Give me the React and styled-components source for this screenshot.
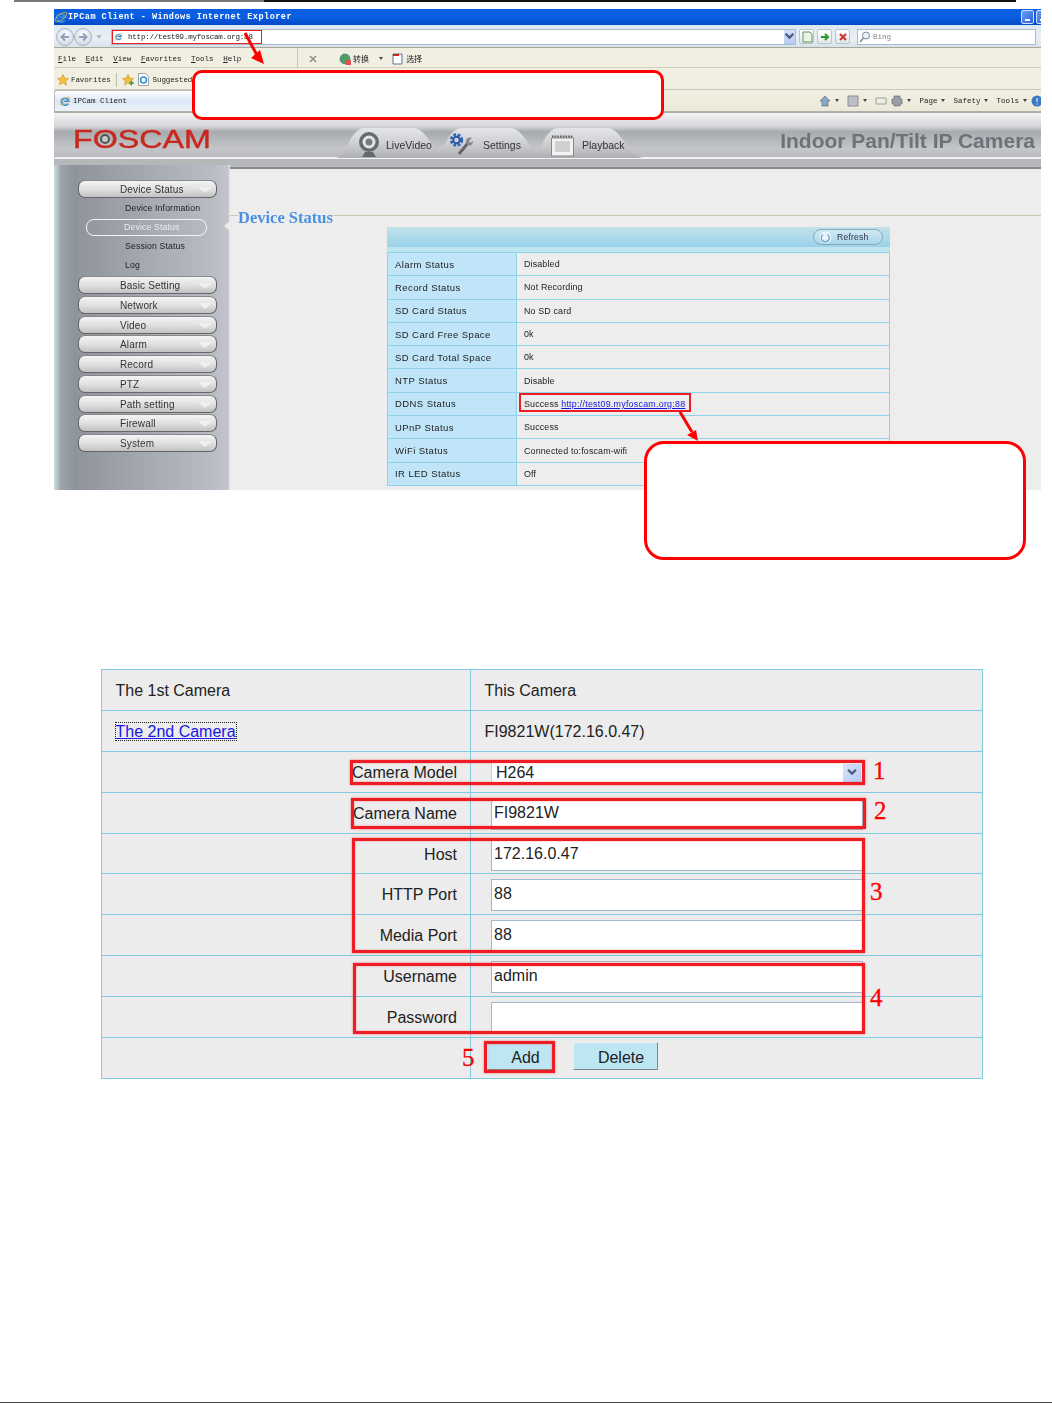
import React from "react";
import styled, { createGlobalStyle } from "styled-components";

const Global = createGlobalStyle`
  html, body { margin: 0; padding: 0; background: #fff; }
  body { font-family: "Liberation Sans", Arial, sans-serif; }
  * { box-sizing: border-box; }
`;

const Page = styled.div`
  position: relative; width: 1052px; height: 1404px; overflow: hidden;
  display: flex; flex-direction: column; background: #fff;
`;
const TopRule = styled.div`
  height: 2px; margin: 0 36px 0 14px;
  background: linear-gradient(90deg, #777 0 25%, #111 25% 100%);
`;
const FootRule = styled.div`
  height: 1px; margin-top: auto; margin-bottom: 1px; background: #444;
`;
const Figure = styled.section`
  position: relative; width: 987px; height: 481px; margin: 7px 0 0 54px;
`;
const Shot = styled.div`
  width: 987px; height: 481px; overflow: hidden; display: flex; flex-direction: column;
  filter: blur(0.3px); background: #ededed;
`;
const Chrome = styled.div`
  font-family: "Liberation Mono", monospace; font-size: 7.5px; color: #222;
`;
const TitleBar = styled.div`
  height: 16px; display: flex; align-items: center; gap: 0; padding-left: 0;
  background: linear-gradient(#0a5fe0, #0a5ee4 50%, #0349c4);
  color: #fff; font-weight: 700; font-size: 8.5px; letter-spacing: .5px;
`;
const WinButtons = styled.div`
  margin-left: auto; display: flex; gap: 2px; margin-right: -8px;
`;
const WinBtn = styled.div`
  position: relative; width: 13px; height: 14px; border: 1px solid #cfe0ff; border-radius: 2px;
  background: linear-gradient(135deg, #6b9cf0, #2a62d8);
  &::after { content: ""; position: absolute; left: 3px; bottom: 2px; width: 5px; height: 2px; background: #fff; }
`;
const AddressBar = styled.div`
  height: 23px; display: flex; align-items: center; padding: 1px 4px 0 2px;
  background: linear-gradient(#dce8f2, #eaf0f5 60%, #d8e2ea);
  border-bottom: 1px solid #a8a89a;
`;
const NavRound = styled.div`
  width: 18px; height: 18px; border-radius: 50%; border: 1px solid #aab4c0;
  background: radial-gradient(circle at 50% 35%, #fff, #c4d0e0);
  display: flex; align-items: center; justify-content: center;
`;
const NavDrop = styled.div`
  width: 0; height: 0; margin: 0 9px 0 4px;
  border: 3px solid transparent; border-top: 4px solid #b4bcc6; border-bottom: 0;
`;
const UrlField = styled.div`
  width: 685px; height: 16px; background: #fff; border: 1px solid #a8bccb;
  display: flex; align-items: center; padding-left: 2px; gap: 5px; letter-spacing: -.2px;
`;
const UrlDrop = styled.div`
  margin-left: auto; width: 11px; height: 14px; background: linear-gradient(#d4e0f8, #b8ccf0);
  display: flex; align-items: center; justify-content: center; color: #405070;
`;
const ToolSquare = styled.div`
  width: 15px; height: 15px; margin-left: 3px; border: 1px solid #b8c6cf; border-radius: 2px;
  background: linear-gradient(#fff, #dfe6ea); display: flex; align-items: center; justify-content: center;
`;
const SearchField = styled.div`
  width: 179px; height: 16px; margin-left: 7px; background: #fff; border: 1px solid #a8bccb;
  display: flex; align-items: center; gap: 2px; color: #888; padding-left: 1px;
`;
const MenuBar = styled.div`
  height: 20px; display: flex; align-items: center; gap: 9.6px; padding: 2px 0 0 4px;
  background: #f1efe2; border-bottom: 1px solid #d4d0c0;
`;
const MenuItem = styled.span`
  &::first-letter { text-decoration: underline; }
`;
const MenuDivider = styled.i`
  width: 1px; height: 20px; margin-top: -2px; background: #c8c6b8; margin-left: ${p => p.$l || 48}px;
`;
const Cjk = styled.span`
  font-family: "Noto Sans CJK SC", sans-serif; font-size: 8px; display: inline-flex; align-items: center; gap: 2px;
  margin-left: ${p => p.$l || 0}px;
`;
const FavBar = styled.div`
  height: 22px; display: flex; align-items: center; gap: 2px; padding: 2px 0 0 3px; letter-spacing: -.1px;
  background: #f1efe2; border-bottom: 1px solid #c9c7b8;
`;
const FavDivider = styled.i`
  width: 1px; height: 14px; background: #bcbaab; margin: 0 3px;
`;
const TabBar = styled.div`
  height: 23px; display: flex; align-items: flex-end;
  background: linear-gradient(#f1efe2, #ece9da);
  border-bottom: 2px solid #b0b0a8;
`;
const PageTab = styled.div`
  width: 140px; height: 21px; display: flex; align-items: center; gap: 2px; padding-left: 4px;
  border: 1px solid #b8bcc0; border-bottom: 0; border-radius: 3px 3px 0 0;
  background: linear-gradient(#fff, #dbe6f6 50%, #eef3fa);
`;
const TabTools = styled.div`
  margin-left: auto; height: 21px; display: flex; align-items: center; gap: 4px; margin-right: -2px;
`;
const Tri = styled.span`
  width: 0; height: 0; border: 2px solid transparent; border-top: 3px solid #444; border-bottom: 0;
  margin: 0 ${p => p.$m ?? 4}px 0 0;
`;
const Header = styled.header`
  position: relative; height: 52px; flex: none;
  background: linear-gradient(#f4f4f5 0, #d4d5d8 26%, #a7aaae 36%, #c4c6c9 68%, #b5b7bb 90%);
  display: flex; align-items: flex-start;
  &::after {
    content: ""; position: absolute; left: 0; right: 0; bottom: 6px; height: 2px; background: #f2f3f4; border-radius: 4px 0 0 0;
  }
`;
const Logo = styled.div`
  margin: 12px 0 0 19px; width: 138px; height: 29px; color: #c9281f; font-size: 25px; line-height: 29px;
  transform: scaleX(1.29); transform-origin: 0 50%; -webkit-text-stroke: .4px #c9281f;
  display: flex; white-space: nowrap;
`;
const LogoLens = styled.i`
  position: absolute; left: 46px; top: 21px; width: 10px; height: 10px; border-radius: 50%;
  background: #c8c8c8; border: 2.5px solid #555;
`;
const Tabs = styled.nav`
  position: absolute; left: 281px; top: 15px; display: flex; z-index: 1;
`;
const HeadTab = styled.div`
  position: relative; width: 116px; height: 30px; margin-right: -19px; display: flex; align-items: center; gap: ${p => p.$g || 5}px;
  padding: 3px 0 0 ${p => p.$p || 22}px; font-size: 10.5px; color: #333; isolation: isolate;
  &::before {
    content: ""; position: absolute; inset: 0; z-index: -1;
    background: linear-gradient(#e4e5e7, #cfd0d3 50%, #aeb0b4);
    clip-path: path("M0 30 C12 30 14 0 30 0 L78 0 C94 0 98 30 116 30 Z");
  }
`;
const HeadTitle = styled.h1`
  position: absolute; right: 6px; top: 16px; margin: 0; font-size: 21px; font-weight: 700; color: #6d7279;
`;
const Main = styled.div`
  flex: 1; display: flex; min-height: 0;
`;
const Sidebar = styled.aside`
  width: 176px; flex: none; padding: 15px 13px 0 24px; display: flex; flex-direction: column; gap: 1.75px;
  background: linear-gradient(90deg, #cfdde0 0, #9ba3a8 4%, #8f949c 12%, #b9bcc5 90%, #c3c5cc 99%, #eee 100%);
`;
const MenuBtn = styled.div`
  position: relative; height: 18px; flex: none; padding-left: 41px; line-height: 17px; font-size: 10px; letter-spacing: .15px; color: #333;
  border: 1px solid #666; border-top-color: #888; border-radius: 7px;
  background: linear-gradient(#f5f5f5, #dedede 55%, #c2c2c4);
  &::after {
    content: ""; position: absolute; right: 4px; top: 6px; width: 0; height: 0;
    border-left: 7px solid transparent; border-right: 7px solid transparent; border-top: 6px solid #f0f0f2;
  }
`;
const SubList = styled.div`
  display: flex; flex-direction: column; margin: -1.75px 0 -1.75px; height: 78px; padding-top: .5px;
`;
const SubItem = styled.div`
  height: 19px; display: flex; align-items: center; padding-left: 47px; font-size: 8.7px; letter-spacing: .15px; color: #222;
`;
const SubActive = styled(SubItem)`
  margin-left: 8px; width: 121px; padding-left: 37px; height: 16.5px; margin-top: 1.5px; margin-bottom: 1px;
  border: 1px solid #f4f4f4; border-radius: 8px; color: #ececec;
`;
const Content = styled.main`
  position: relative; flex: 1; display: flex; flex-direction: column; background: #ededed;
  &::after {
    content: ""; position: absolute; left: -6px; top: 56px; width: 0; height: 0;
    border-top: 5px solid transparent; border-bottom: 5px solid transparent; border-right: 6px solid #ededed;
  }
`;
const Strip = styled.div`
  height: 4px; flex: none; background: linear-gradient(#b9bbbe 0 50%, #88898d 50%);
`;
const HeadingRow = styled.div`
  height: 18px; margin-top: 39px; display: flex; align-items: center; flex: none;
  &::before { content: ""; width: 8px; height: 1px; margin-top: -3px; background: #c8c8b0; }
  &::after { content: ""; flex: 1; height: 1px; margin-top: -3px; background: #c8c8b0; }
`;
const Heading = styled.h2`
  margin: 2px 0 0; font-family: "Liberation Serif", serif; font-weight: 700; font-size: 16.5px; color: #4a90e2; white-space: nowrap;
`;
const Panel = styled.div`
  width: 503px; margin: 1px 0 0 157px; flex: none;
`;
const PanelHead = styled.div`
  height: 20px; display: flex; align-items: center; justify-content: flex-end; padding-right: 7px;
  background: linear-gradient(#c2e2ea, #9ad2ea);
`;
const RefreshBtn = styled.div`
  width: 70px; height: 16px; display: flex; align-items: center; gap: 5px; padding-left: 5px; font-size: 8.6px; letter-spacing: .2px; color: #334;
  border: 1px solid #88a8c0; border-radius: 8px; background: linear-gradient(#d2e8f2, #a8d6ec);
`;
const PanelGap = styled.div`
  height: 5px; background: #bfe5ef;
`;
const StatusTable = styled.table`
  width: 100%; height: 234px; border-collapse: collapse; table-layout: fixed; font-size: 8.9px; letter-spacing: .15px; color: #222;
  td { border: 1px solid #8fd3ea; padding: 0 0 0 7px; }
  td:first-child { width: 129px; background: #c0e5f8; font-size: 9.5px; letter-spacing: .42px; }
`;
const DocLink = styled.a`
  color: #1414e0; text-decoration: underline; letter-spacing: .25px;
`;
const DocWrap = styled.section`
  position: relative; width: 882px; margin: 179px 0 0 101px;
`;
const CamTable = styled.table`
  width: 100%; height: 409px; border-collapse: collapse; table-layout: fixed; background: #ececec;
  font-size: 16px; color: #222; letter-spacing: 0;
  border: 1px solid #71c6e4;
  td { border: 1px solid #7fcbe6; height: 40.9px; padding: 2px 0 0 13.5px; white-space: nowrap; }
  td:first-child { width: 369px; }
`;
const LabelCell = styled.td`
  text-align: right; && { padding: 2px 13px 0 0; }
`;
const InputCell = styled.td`
  && { padding: 2px 0 0 20px; }
`;
const FakeInput = styled.div`
  width: 372px; height: 32px; background: #fff; border: 1.5px solid #a3b6cf; padding: 0 0 2px 2px;
  display: flex; align-items: center; line-height: 1;
`;
const FakeSelect = styled(FakeInput)`
  height: 21px; border-color: #c3cede; justify-content: space-between; padding: 0 1px 0 4px;
`;
const SelectArrow = styled.span`
  width: 18px; height: 18px; background: linear-gradient(135deg, #d6e2fb, #b6cbf3); display: flex; align-items: center; justify-content: center;
`;
const CamLink = styled.a`
  color: #1717e6; text-decoration: underline; outline: 1px dotted #222;
`;
const ActionRow = styled.div`
  display: flex; align-items: center; gap: 20px; margin-left: -4px; padding-bottom: 5px;
`;
const CamButton = styled.div`
  width: ${p => p.$w}px; height: 28px; text-align: center; line-height: 29px; padding-left: 11px; background: #bde5f2; font-size: 16px; color: #222;
  border: 1px solid; border-color: #f2f2ea #7b8a86 #7b8a86 #f2f2ea;
`;

/* annotations */
const Callout = styled.div`
  position: absolute; left: ${p => p.$x}px; top: ${p => p.$y}px; width: ${p => p.$w}px; height: ${p => p.$h}px;
  background: #fff; border: 3px solid #f00; border-radius: ${p => p.$r}px;
`;
const RedBox = styled.div`
  position: absolute; left: ${p => p.$x}px; top: ${p => p.$y}px; width: ${p => p.$w}px; height: ${p => p.$h}px;
  border: ${p => p.$t || 3}px solid #ee1c25; box-shadow: ${p => p.$thin ? "none" : "0 0 2px rgba(255,0,0,.55), inset 0 0 2px rgba(255,0,0,.45)"};
  pointer-events: none;
`;
const Num = styled.span`
  position: absolute; left: ${p => p.$x}px; top: ${p => p.$y}px; font-family: "Liberation Serif", serif; font-size: 25px; line-height: 24px; color: #f00;
  -webkit-text-stroke: .3px #f00;
`;
const ArrowLayer = styled.svg`
  position: absolute; left: 0; top: 0; overflow: visible; pointer-events: none;
`;

/* icons */
const IeIcon = ({ s = 14 }) => (
  <svg width={s} height={s} viewBox="0 0 16 16" style={{ flex: "none" }}>
    <path d="M3 9.5a5.2 5.2 0 0 1 10.2-1.2H6M3.5 9.5a5 5 0 0 0 9 2" fill="none" stroke="#2f8fe0" strokeWidth="2.2" />
    <ellipse cx="8" cy="8" rx="8" ry="3.2" fill="none" stroke="#e8b030" strokeWidth=".9" transform="rotate(-35 8 8)" />
  </svg>
);
const ArrowNav = ({ dir }) => (
  <svg width="12" height="12" viewBox="0 0 12 12">
    <path d={dir === "l" ? "M10 6H3M6 2.5L2.5 6 6 9.5" : "M2 6h7M6 2.5L9.5 6 6 9.5"} fill="none" stroke="#8fa0b8" strokeWidth="2" />
  </svg>
);
const Star = ({ plus }) => (
  <svg width="12" height="12" viewBox="0 0 12 12" style={{ flex: "none" }}>
    <path d="M6 .5l1.7 3.6 3.8.5-2.8 2.7.7 3.9L6 8.8l-3.4 1.9.7-3.9L.5 4.6l3.8-.5z" fill="#f4c040" stroke="#c89020" strokeWidth=".6" />
    {plus && <path d="M7 9h5M9.5 6.8v4.5" stroke="#3aa050" strokeWidth="1.4" />}
  </svg>
);
const PageIe = () => (
  <svg width="11" height="13" viewBox="0 0 11 13" style={{ flex: "none", margin: "0 2px" }}>
    <path d="M.5.5h7l3 3v9H.5z" fill="#fff" stroke="#a0a0a0" />
    <circle cx="5.5" cy="7" r="3" fill="none" stroke="#2f8fe0" strokeWidth="1.6" />
  </svg>
);
const Webcam = () => (
  <svg width="24" height="28" viewBox="0 0 24 28" style={{ flex: "none" }}>
    <circle cx="12" cy="11" r="10" fill="#666a6e" />
    <circle cx="12" cy="11" r="6.5" fill="#e4e5e6" />
    <circle cx="12" cy="11" r="3.5" fill="#777b80" />
    <path d="M5 26h14l-3-5H8z" fill="#666a6e" />
  </svg>
);
const Gears = () => (
  <svg width="25" height="26" viewBox="0 0 25 26" style={{ flex: "none" }}>
    <circle cx="7.5" cy="8" r="5" fill="none" stroke="#3466b8" strokeWidth="3.4" strokeDasharray="2.6 1.4" />
    <circle cx="7.5" cy="8" r="3.2" fill="none" stroke="#2d5aa8" strokeWidth="2" />
    <path d="M10 22l9-11" stroke="#666" strokeWidth="3" />
    <path d="M17 9a4 4 0 0 1 6-3l-3 3 1 2 3-2a4 4 0 0 1-6 4" fill="#888" />
  </svg>
);
const Calendar = () => (
  <svg width="23" height="24" viewBox="0 0 23 24" style={{ flex: "none" }}>
    <path d="M.5 5h22v18H.5z" fill="#f2f2f2" stroke="#888" />
    <path d="M4 8h15v11H4z" fill="#d0d0d0" />
    <path d="M1 3.5h21" stroke="#555" strokeWidth="2" strokeDasharray="1.5 1.2" />
  </svg>
);
const Refresh = () => (
  <svg width="13" height="13" viewBox="0 0 13 13">
    <circle cx="6.5" cy="6.5" r="6" fill="#e8f4fa" />
    <path d="M4 3.5a4 4 0 1 0 4.5 0" fill="none" stroke="#6aa8d0" strokeWidth="1.4" />
  </svg>
);
const Chev = () => (
  <svg width="12" height="9" viewBox="0 0 10 8">
    <path d="M1.5 1.5L5 5l3.5-3.5" fill="none" stroke="#4a5a78" strokeWidth="2" />
  </svg>
);
const Mini = ({ kind }) => {
  const map = {
    page: <path d="M2 1h7l2 2v8H2z" fill="#e8f4e8" stroke="#5a9a5a" />,
    go: <path d="M2 6h6M6 3l3 3-3 3" fill="none" stroke="#2a9a2a" strokeWidth="2" />,
    stop: <path d="M3 3l6 6M9 3l-6 6" stroke="#d03030" strokeWidth="2" />,
    mag: <><circle cx="7" cy="4.5" r="3.5" fill="#eaf2fa" stroke="#7a8a9a" /><path d="M4.5 7L1 11" stroke="#7a8a9a" strokeWidth="1.5" /></>,
    x: <path d="M3 3l6 6M9 3l-6 6" stroke="#909088" strokeWidth="1.6" />,
    home: <path d="M6 1L1 6h2v5h6V6h2z" fill="#88a8c8" stroke="#506070" strokeWidth=".6" />,
    rss: <path d="M1 1h10v10H1z" fill="#bcc0c4" stroke="#8a8e92" />,
    mail: <path d="M1 3h10v6H1z" fill="#eeeee8" stroke="#a0a098" />,
    print: <path d="M3 1h6v3h2v5H9v2H3V9H1V4h2z" fill="#9aa0a8" stroke="#606468" strokeWidth=".6" />,
    help: <><circle cx="6" cy="6" r="5.5" fill="#3a78c8" /><path d="M6 3v4M6 8.5v1" stroke="#fff" /></>,
    globe: <><circle cx="6" cy="6" r="5" fill="#4aa060" stroke="#406080" strokeWidth=".6" /><path d="M7 7h5v5H7z" fill="#e05050" /></>,
    sel: <><path d="M1 1h9v10H1z" fill="#fff" stroke="#6070a0" /><path d="M1 2h6" stroke="#d02020" strokeWidth="2" /></>,
  };
  return <svg width="12" height="12" viewBox="0 0 12 12" style={{ flex: "none" }}>{map[kind]}</svg>;
};

const statusRows = [
  ["Alarm Status", "Disabled"],
  ["Record Status", "Not Recording"],
  ["SD Card Status", "No SD card"],
  ["SD Card Free Space", "0k"],
  ["SD Card Total Space", "0k"],
  ["NTP Status", "Disable"],
  ["DDNS Status", null],
  ["UPnP Status", "Success"],
  ["WiFi Status", "Connected to:foscam-wifi"],
  ["IR LED Status", "Off"],
];
const menuAfter = ["Basic Setting", "Network", "Video", "Alarm", "Record", "PTZ", "Path setting", "Firewall", "System"];

export default function App() {
  return (
    <Page>
      <Global />
      <TopRule />
      <Figure>
        <Shot>
          <Chrome>
            <TitleBar>
              <IeIcon />
              <span>IPCam Client - Windows Internet Explorer</span>
              <WinButtons><WinBtn /><WinBtn /></WinButtons>
            </TitleBar>
            <AddressBar>
              <NavRound><ArrowNav dir="l" /></NavRound>
              <NavRound><ArrowNav dir="r" /></NavRound>
              <NavDrop />
              <UrlField>
                <IeIcon s={9} />
                <span>http://test09.myfoscam.org:88</span>
                <UrlDrop><Chev /></UrlDrop>
              </UrlField>
              <ToolSquare><Mini kind="page" /></ToolSquare>
              <ToolSquare><Mini kind="go" /></ToolSquare>
              <ToolSquare><Mini kind="stop" /></ToolSquare>
              <SearchField><Mini kind="mag" />Bing</SearchField>
            </AddressBar>
            <MenuBar>
              {["File", "Edit", "View", "Favorites", "Tools", "Help"].map(m => <MenuItem key={m}>{m}</MenuItem>)}
              <MenuDivider $l={46} />
              <Mini kind="x" />
              <Cjk $l={10}><Mini kind="globe" />转换</Cjk>
              <Tri $m={0} />
              <Cjk><Mini kind="sel" />选择</Cjk>
            </MenuBar>
            <FavBar>
              <Star />
              <span>Favorites</span>
              <FavDivider />
              <Star plus />
              <PageIe />
              <span>Suggested</span>
            </FavBar>
            <TabBar>
              <PageTab><IeIcon s={12} />IPCam Client</PageTab>
              <TabTools>
                <Mini kind="home" /><Tri />
                <Mini kind="rss" /><Tri />
                <Mini kind="mail" />
                <Mini kind="print" /><Tri />
                <span>Page</span><Tri />
                <span>Safety</span><Tri />
                <span>Tools</span><Tri $m={0} />
                <Mini kind="help" />
              </TabTools>
            </TabBar>
          </Chrome>
          <Header>
            <Logo>FOSCAM</Logo>
            <LogoLens />
            <Tabs>
              <HeadTab><Webcam />LiveVideo</HeadTab>
              <HeadTab $p={17} $g={9}><Gears />Settings</HeadTab>
              <HeadTab $g={8}><Calendar />Playback</HeadTab>
            </Tabs>
            <HeadTitle>Indoor Pan/Tilt IP Camera</HeadTitle>
          </Header>
          <Main>
            <Sidebar>
              <MenuBtn>Device Status</MenuBtn>
              <SubList>
                <SubItem>Device Information</SubItem>
                <SubActive>Device Status</SubActive>
                <SubItem>Session Status</SubItem>
                <SubItem>Log</SubItem>
              </SubList>
              {menuAfter.map(m => <MenuBtn key={m}>{m}</MenuBtn>)}
            </Sidebar>
            <Content>
              <Strip />
              <HeadingRow><Heading>Device Status</Heading></HeadingRow>
              <Panel>
                <PanelHead><RefreshBtn><Refresh />Refresh</RefreshBtn></PanelHead>
                <PanelGap />
                <StatusTable>
                  <tbody>
                    {statusRows.map(([k, v]) => (
                      <tr key={k}>
                        <td>{k}</td>
                        <td>{v ?? <>Success <DocLink href="#">http://test09.myfoscam.org:88</DocLink></>}</td>
                      </tr>
                    ))}
                  </tbody>
                </StatusTable>
              </Panel>
            </Content>
          </Main>
        </Shot>
        <RedBox $x={58} $y={21} $w={150} $h={14} $t={1.5} $thin />
        <Callout $x={138} $y={61} $w={472} $h={50} $r={10} />
        <RedBox $x={465} $y={384} $w={172} $h={19} $t={2} $thin />
        <Callout $x={590} $y={432} $w={382} $h={119} $r={20} />
        <ArrowLayer width="987" height="560">
          <path d="M191 24L204 48" stroke="#f00" strokeWidth="3" />
          <path d="M197 49L206 41L210 55Z" fill="#f00" />
          <path d="M626 403L638 423" stroke="#f00" strokeWidth="3" />
          <path d="M633 426L642 421L644 432Z" fill="#f00" />
        </ArrowLayer>
      </Figure>
      <DocWrap>
        <CamTable>
          <tbody>
            <tr><td>The 1st Camera</td><td>This Camera</td></tr>
            <tr><td><CamLink href="#">The 2nd Camera</CamLink></td><td>FI9821W(172.16.0.47)</td></tr>
            <tr><LabelCell>Camera Model</LabelCell><InputCell><FakeSelect>H264<SelectArrow><Chev /></SelectArrow></FakeSelect></InputCell></tr>
            <tr><LabelCell>Camera Name</LabelCell><InputCell><FakeInput>FI9821W</FakeInput></InputCell></tr>
            <tr><LabelCell>Host</LabelCell><InputCell><FakeInput>172.16.0.47</FakeInput></InputCell></tr>
            <tr><LabelCell>HTTP Port</LabelCell><InputCell><FakeInput>88</FakeInput></InputCell></tr>
            <tr><LabelCell>Media Port</LabelCell><InputCell><FakeInput>88</FakeInput></InputCell></tr>
            <tr><LabelCell>Username</LabelCell><InputCell><FakeInput>admin</FakeInput></InputCell></tr>
            <tr><LabelCell>Password</LabelCell><InputCell><FakeInput /></InputCell></tr>
            <tr>
              <LabelCell />
              <InputCell><ActionRow><CamButton $w={66}>Add</CamButton><CamButton $w={85}>Delete</CamButton></ActionRow></InputCell>
            </tr>
          </tbody>
        </CamTable>
        <RedBox $x={249} $y={91} $w={515} $h={25} />
        <RedBox $x={250} $y={129} $w={515} $h={31} />
        <RedBox $x={251} $y={169} $w={513} $h={115} />
        <RedBox $x={252} $y={294} $w={512} $h={71} />
        <RedBox $x={383} $y={372} $w={71} $h={32} />
        <Num $x={772} $y={90}>1</Num>
        <Num $x={773} $y={130}>2</Num>
        <Num $x={769} $y={211}>3</Num>
        <Num $x={769} $y={317}>4</Num>
        <Num $x={361} $y={377}>5</Num>
      </DocWrap>
      <FootRule />
    </Page>
  );
}
